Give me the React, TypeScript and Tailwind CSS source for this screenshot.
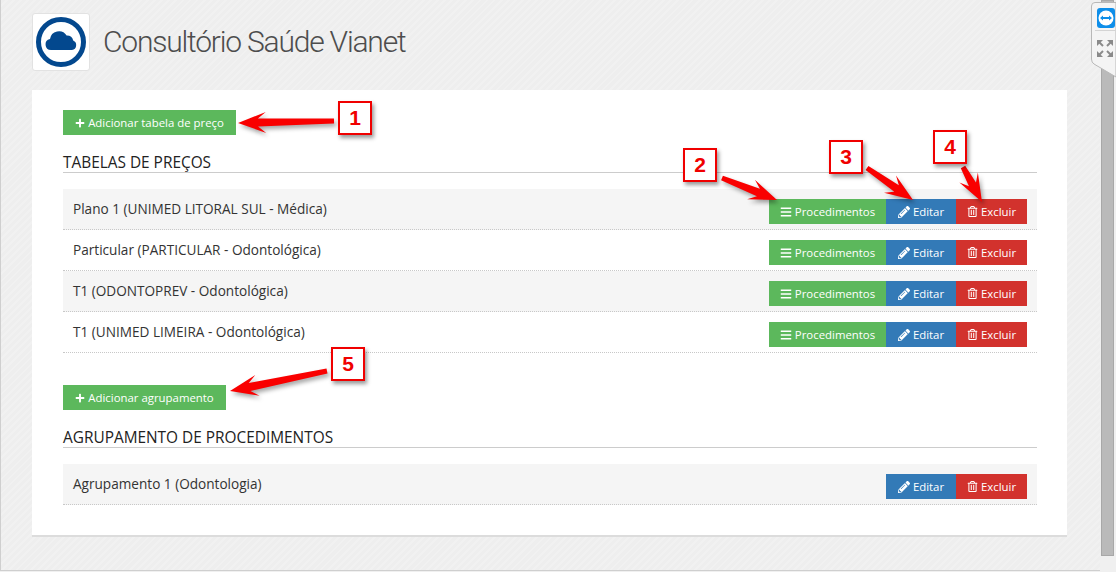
import { FaBars, FaPencilAlt, FaPlus, FaRegTrashAlt } from "react-icons/fa";

const tabelas = [
  "Plano 1 (UNIMED LITORAL SUL - Médica)",
  "Particular (PARTICULAR - Odontológica)",
  "T1 (ODONTOPREV - Odontológica)",
  "T1 (UNIMED LIMEIRA - Odontológica)",
];

const callouts = [
  { n: "1", cls: "left-[338px] top-[101px]" },
  { n: "2", cls: "left-[683px] top-[148px]" },
  { n: "3", cls: "left-[829px] top-[140px]" },
  { n: "4", cls: "left-[933px] top-[130px]" },
  { n: "5", cls: "left-[331px] top-[347px]" },
];

// cauda -> ponta
const arrows = [
  [334, 121, 238, 123],
  [722, 178, 777, 200],
  [867, 168, 913, 200],
  [963, 167, 982, 202],
  [327, 371, 230, 391],
];

function arrowPoints([x1, y1, x2, y2]: number[]) {
  const len = Math.hypot(x2 - x1, y2 - y1);
  const ux = (x2 - x1) / len;
  const uy = (y2 - y1) / len;
  const px = -uy;
  const py = ux;
  const head = 28;
  const pts = [
    [x1 + px * 2.5, y1 + py * 2.5],
    [x2 - ux * (head - 8) + px * 4, y2 - uy * (head - 8) + py * 4],
    [x2 - ux * head + px * 10.5, y2 - uy * head + py * 10.5],
    [x2, y2],
    [x2 - ux * head - px * 10.5, y2 - uy * head - py * 10.5],
    [x2 - ux * (head - 8) - px * 4, y2 - uy * (head - 8) - py * 4],
    [x1 - px * 2.5, y1 - py * 2.5],
  ];
  return pts.map((p) => p.join(",")).join(" ");
}

function AddButton({ label, width }: { label: string; width: string }) {
  return (
    <button className={`flex h-[25px] items-center justify-center gap-[3px] bg-[#5cb85c] text-[11.4px] text-white ${width}`}>
      <FaPlus className="size-[10px]" />
      {label}
    </button>
  );
}

function Row({ label, odd, proc = true }: { label: string; odd: boolean; proc?: boolean }) {
  return (
    <div className={`flex h-[41px] items-start justify-between border-b border-dotted border-[#c8c8c8] px-[10px] pt-[10px] ${odd ? "bg-[#f5f5f5]" : "bg-white"}`}>
      <span className="text-[13.6px] leading-[20px] text-[#333]">{label}</span>
      <div className="flex text-[11.4px] text-white">
        {proc && (
          <button className="flex h-[25px] w-[117px] items-center justify-center gap-[3px] bg-[#5cb85c]">
            <FaBars className="size-[12px]" />
            Procedimentos
          </button>
        )}
        <button className="flex h-[25px] w-[70px] items-center justify-center gap-[3px] bg-[#337ab7]">
          <FaPencilAlt className="size-[12px]" />
          Editar
        </button>
        <button className="flex h-[25px] w-[71px] items-center justify-center gap-[3px] bg-[#d2322d]">
          <FaRegTrashAlt className="size-[11px]" />
          Excluir
        </button>
      </div>
    </div>
  );
}

function Heading({ children }: { children: string }) {
  return <h2 className="h-[20px] border-b border-[#ccc] text-[15.4px] leading-[20px] text-[#222]">{children}</h2>;
}

export default function App() {
  return (
    <div className="relative h-[572px] w-[1116px] overflow-hidden bg-[#f0f0f0] font-['Open_Sans',sans-serif]">
      <div className="h-[571px] w-[1100px] border-b border-l border-[#cfcfcf] bg-[#eeeeee] bg-[repeating-linear-gradient(135deg,#eeeeee_0px,#eeeeee_3px,#f1f1f1_3px,#f1f1f1_5px)]">
        {/* Cabecalho */}
        <header className="flex h-[90px] items-start pl-[31px] pt-[13px]">
          <div className="flex size-[58px] items-center justify-center rounded-[3px] border border-[#e2e2e2] bg-white">
            <svg viewBox="0 0 50 50" className="size-[50px]">
              <circle cx="25" cy="25" r="22.500" fill="none" stroke="#03488e" strokeWidth="5" />
              <path d="M15 33a5.500 5.500 0 0 1-1-10.900 9 9 0 0 1 16.600-3.600 6.500 6.500 0 0 1 6.600 5A5 5 0 0 1 36 33Z" fill="#03488e" />
            </svg>
          </div>
          <h1 className="ml-[13px] mt-[9px] font-['Roboto',sans-serif] text-[30px] font-light leading-[40px] tracking-[-1.2px] text-[#4d4d4d]">
            Consultório Saúde Vianet
          </h1>
        </header>

        {/* Cartao */}
        <main className="ml-[31px] h-[447px] w-[1035px] border-b-2 border-[#dcdcdc] bg-white pl-[31px] pr-[30px] pt-[20px]">
          <AddButton label="Adicionar tabela de preço" width="w-[173px]" />
          <div className="mt-[18px]">
            <Heading>TABELAS DE PREÇOS</Heading>
          </div>
          <div className="mt-[16px]">
            {tabelas.map((t, i) => (
              <Row key={t} label={t} odd={i % 2 === 0} />
            ))}
          </div>
          <div className="mt-[32px]">
            <AddButton label="Adicionar agrupamento" width="w-[163px]" />
          </div>
          <div className="mt-[18px]">
            <Heading>AGRUPAMENTO DE PROCEDIMENTOS</Heading>
          </div>
          <div className="mt-[16px]">
            <Row label="Agrupamento 1 (Odontologia)" odd proc={false} />
          </div>
        </main>
      </div>

      {/* Barra de rolagem */}
      <div className="absolute right-[2px] top-0 h-[556px] w-[13px] border border-[#a8a8a8] bg-[#bababa]" />

      {/* Painel TeamViewer */}
      <div className="absolute right-0 top-[2px]">
        <svg width="25" height="76" viewBox="0 0 25 76">
          <path d="M.5 4a3.500 3.500 0 0 1 3.500-3.500H25V75L3 62Q.5 60.500 .5 57Z" fill="#f4f4f4" stroke="#b8b8b8" />
          <rect x="6" y="6" width="18" height="20" rx="3" fill="#0e8ee9" />
          <circle cx="15" cy="16" r="7.500" fill="#fff" />
          <path d="M9 16l3-2.500v1.500h6v-1.500l3 2.500-3 2.500V17h-6v1.500Z" fill="#0e8ee9" />
          <path d="M4 28.500H25" stroke="#d4d4d4" />
          <g fill="#8a8a8a" stroke="#8a8a8a">
            <path d="M6 38h6l-6 6Z" strokeWidth="0" />
            <path d="M8 40l4 4" strokeWidth="2" />
            <path d="M22 38v6l-6-6Z" strokeWidth="0" />
            <path d="M20 40l-4 4" strokeWidth="2" />
            <path d="M6 55v-6l6 6Z" strokeWidth="0" />
            <path d="M8 53l4-4" strokeWidth="2" />
            <path d="M22 55h-6l6-6Z" strokeWidth="0" />
            <path d="M20 53l-4-4" strokeWidth="2" />
          </g>
        </svg>
      </div>

      {/* Anotacoes */}
      <svg className="pointer-events-none absolute inset-0 drop-shadow-[2px_3px_2px_rgba(0,0,0,0.35)]" width="1116" height="572">
        {arrows.map((a) => (
          <polygon key={a.join()} points={arrowPoints(a)} fill="#f90000" />
        ))}
      </svg>
      {callouts.map((c) => (
        <div
          key={c.n}
          className={`absolute flex h-[34px] w-[34px] items-center justify-center border-2 border-[#f00000] bg-white font-['Liberation_Sans',sans-serif] text-[21px] font-bold text-[#f00000] shadow-[2px_3px_4px_rgba(0,0,0,0.4)] ${c.cls}`}
        >
          {c.n}
        </div>
      ))}
    </div>
  );
}
